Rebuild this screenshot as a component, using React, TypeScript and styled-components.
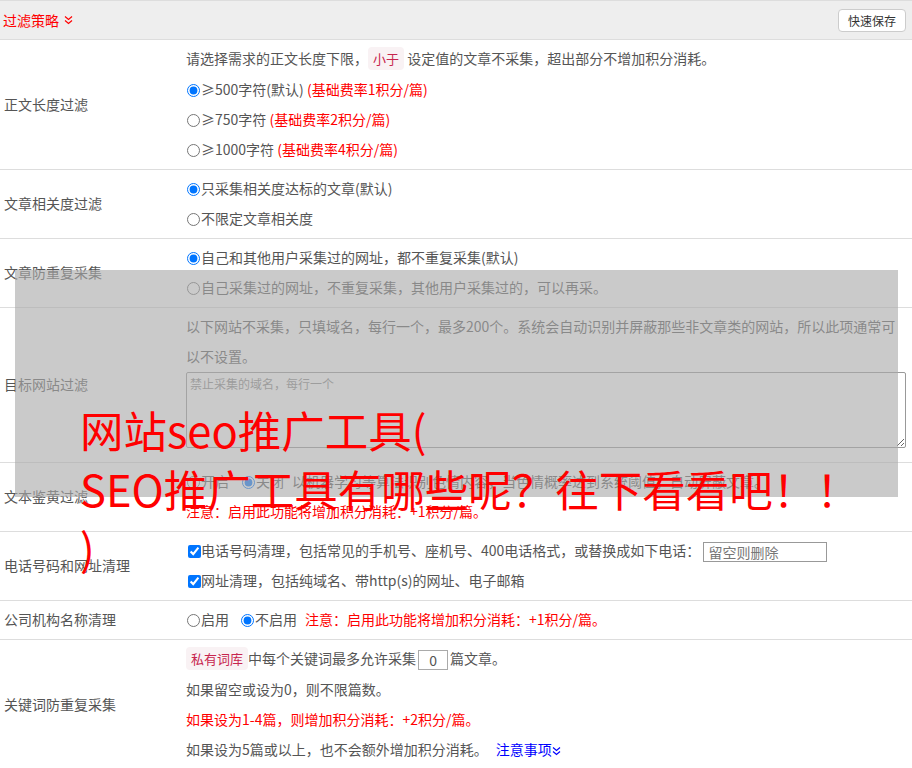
import React from "react";
import styled, { createGlobalStyle } from "styled-components";

const GlobalStyle = createGlobalStyle`
  html, body { margin: 0; padding: 0; background: #fff; }
  body {
    font-family: "Noto Sans CJK SC", "Noto Sans", "Liberation Sans", sans-serif;
    font-size: 14px;
    color: #555;
  }
  * { box-sizing: border-box; }
`;

const Page = styled.div`
  position: relative;
  width: 912px;
  overflow: hidden;
`;

const Header = styled.div`
  display: flex;
  align-items: center;
  justify-content: space-between;
  height: 40px;
  padding: 0 6px 0 3px;
  background: #eee;
  border-top: 1px solid #ddd;
  border-bottom: 1px solid #ddd;
`;

const Title = styled.div`
  display: flex;
  align-items: center;
  gap: 5px;
  color: #f00;
  font-size: 14px;
`;

const SaveButton = styled.button`
  height: 23px;
  padding: 0 9px;
  font-family: inherit;
  font-size: 12px;
  color: #333;
  background: #fff;
  border: 1px solid #ccc;
  border-radius: 4px;
`;

const Row = styled.div`
  display: grid;
  grid-template-columns: 186px 1fr;
  border-bottom: 1px solid #ddd;
`;

const Label = styled.div`
  align-self: center;
  padding-left: 4px;
  padding-bottom: 2px;
  font-size: 14px;
  color: #555;
`;

const Content = styled.div`
  padding: 3px 6px 5px 0;
  line-height: 30px;
`;

const Line = styled.div<{ $red?: boolean }>`
  line-height: 30px;
  white-space: nowrap;
  color: ${(p) => (p.$red ? "#f00" : "#555")};
`;

const WrapLine = styled.div`
  line-height: 30px;
`;

const Choice = styled.label<{ $gap?: number }>`
  margin-right: ${(p) => p.$gap ?? 0}px;
`;

const Radio = styled.input.attrs({ type: "radio" })`
  width: 13px;
  height: 13px;
  margin: 0 1px 0 1px;
  vertical-align: -2px;
`;

const Check = styled.input.attrs({ type: "checkbox" })`
  width: 13px;
  height: 13px;
  margin: 0 0 0 2px;
  vertical-align: -2px;
`;

const Red = styled.span`
  color: #f00;
`;

const Code = styled.code`
  font-family: inherit;
  font-size: 13px;
  color: #c7254e;
  background: #f9f2f4;
  padding: 2px 5px;
  border-radius: 4px;
`;

const DomainArea = styled.textarea`
  display: block;
  width: 100%;
  height: 76px;
  margin: 1px 0 9px;
  padding: 2px 3px;
  font-family: inherit;
  font-size: 12px;
  border: 1px solid #999;
  border-radius: 2px;
  color: #555;
  &::placeholder { color: #888; }
`;

const PhoneInput = styled.input`
  width: 124px;
  height: 20px;
  padding: 0 4px;
  font-family: inherit;
  font-size: 14px;
  border: 1px solid #999;
  vertical-align: middle;
  &::placeholder { color: #777; }
`;

const CountInput = styled.input`
  width: 30px;
  height: 20px;
  margin: 0 2px;
  padding: 0;
  text-align: center;
  font-family: inherit;
  font-size: 14px;
  color: #555;
  border: 1px solid #aaa;
  vertical-align: middle;
`;

const Link = styled.a`
  color: #00f;
  text-decoration: none;
  margin-left: 8px;
`;

const Shade = styled.div`
  position: absolute;
  left: 15px;
  top: 270px;
  width: 883px;
  height: 227px;
  background: rgba(170, 170, 170, 0.62);
  pointer-events: none;
`;

const Banner = styled.div`
  position: absolute;
  left: 80px;
  top: 400px;
  font-size: 43.5px;
  line-height: 59px;
  color: #f00;
  white-space: nowrap;
  pointer-events: none;
`;

const Chevrons = ({ color }: { color: string }) => (
  <svg width="9" height="10" viewBox="0 0 9 10" style={{ verticalAlign: "-1px" }}>
    <polyline points="1,1.5 4.5,4.5 8,1.5" fill="none" stroke={color} strokeWidth="1.2" />
    <polyline points="1,5.5 4.5,8.5 8,5.5" fill="none" stroke={color} strokeWidth="1.2" />
  </svg>
);

export default function App() {
  return (
    <>
      <GlobalStyle />
      <Page>
        <Header>
          <Title>
            过滤策略 <Chevrons color="#f00" />
          </Title>
          <SaveButton>快速保存</SaveButton>
        </Header>

        <Row>
          <Label>正文长度过滤</Label>
          <Content>
            <Line>
              请选择需求的正文长度下限，<Code>小于</Code> 设定值的文章不采集，超出部分不增加积分消耗。
            </Line>
            <Line>
              <Choice>
                <Radio name="len" defaultChecked />≥500字符(默认)
              </Choice>{" "}
              <Red>(基础费率1积分/篇)</Red>
            </Line>
            <Line>
              <Choice>
                <Radio name="len" />≥750字符
              </Choice>{" "}
              <Red>(基础费率2积分/篇)</Red>
            </Line>
            <Line>
              <Choice>
                <Radio name="len" />≥1000字符
              </Choice>{" "}
              <Red>(基础费率4积分/篇)</Red>
            </Line>
          </Content>
        </Row>

        <Row>
          <Label>文章相关度过滤</Label>
          <Content>
            <Line>
              <Choice>
                <Radio name="rel" defaultChecked />只采集相关度达标的文章(默认)
              </Choice>
            </Line>
            <Line>
              <Choice>
                <Radio name="rel" />不限定文章相关度
              </Choice>
            </Line>
          </Content>
        </Row>

        <Row>
          <Label>文章防重复采集</Label>
          <Content>
            <Line>
              <Choice>
                <Radio name="dup" defaultChecked />自己和其他用户采集过的网址，都不重复采集(默认)
              </Choice>
            </Line>
            <Line>
              <Choice>
                <Radio name="dup" />自己采集过的网址，不重复采集，其他用户采集过的，可以再采。
              </Choice>
            </Line>
          </Content>
        </Row>

        <Row>
          <Label>目标网站过滤</Label>
          <Content>
            <WrapLine>
              以下网站不采集，只填域名，每行一个，最多200个。系统会自动识别并屏蔽那些非文章类的网站，所以此项通常可以不设置。
            </WrapLine>
            <DomainArea placeholder="禁止采集的域名，每行一个" />
          </Content>
        </Row>

        <Row>
          <Label>文本鉴黄过滤</Label>
          <Content>
            <Line>
              <Choice $gap={12}>
                <Radio name="porn" />开启
              </Choice>
              <Choice $gap={8}>
                <Radio name="porn" defaultChecked />关闭
              </Choice>
              以机器学习等算法识别色情内容，当色情概率达到系统阈值，自动屏蔽文章。
            </Line>
            <Line $red>注意：启用此功能将增加积分消耗：+1积分/篇。</Line>
          </Content>
        </Row>

        <Row>
          <Label>电话号码和网址清理</Label>
          <Content>
            <Line>
              <Choice>
                <Check defaultChecked />电话号码清理，包括常见的手机号、座机号、400电话格式，或替换成如下电话：
              </Choice>{" "}
              <PhoneInput placeholder="留空则删除" />
            </Line>
            <Line>
              <Choice>
                <Check defaultChecked />网址清理，包括纯域名、带http(s)的网址、电子邮箱
              </Choice>
            </Line>
          </Content>
        </Row>

        <Row>
          <Label>公司机构名称清理</Label>
          <Content>
            <Line>
              <Choice $gap={11}>
                <Radio name="org" />启用
              </Choice>
              <Choice $gap={8}>
                <Radio name="org" defaultChecked />不启用
              </Choice>
              <Red>注意：启用此功能将增加积分消耗：+1积分/篇。</Red>
            </Line>
          </Content>
        </Row>

        <Row>
          <Label>关键词防重复采集</Label>
          <Content>
            <Line>
              <Code>私有词库</Code>中每个关键词最多允许采集<CountInput defaultValue="0" />篇文章。
            </Line>
            <Line>如果留空或设为0，则不限篇数。</Line>
            <Line $red>如果设为1-4篇，则增加积分消耗：+2积分/篇。</Line>
            <Line>
              如果设为5篇或以上，也不会额外增加积分消耗。
              <Link href="#">
                注意事项
                <Chevrons color="#00f" />
              </Link>
            </Line>
          </Content>
        </Row>

        <Shade />
        <Banner>
          网站seo推广工具(
          <br />
          SEO推广工具有哪些呢？往下看看吧！！
          <br />)
        </Banner>
      </Page>
    </>
  );
}
